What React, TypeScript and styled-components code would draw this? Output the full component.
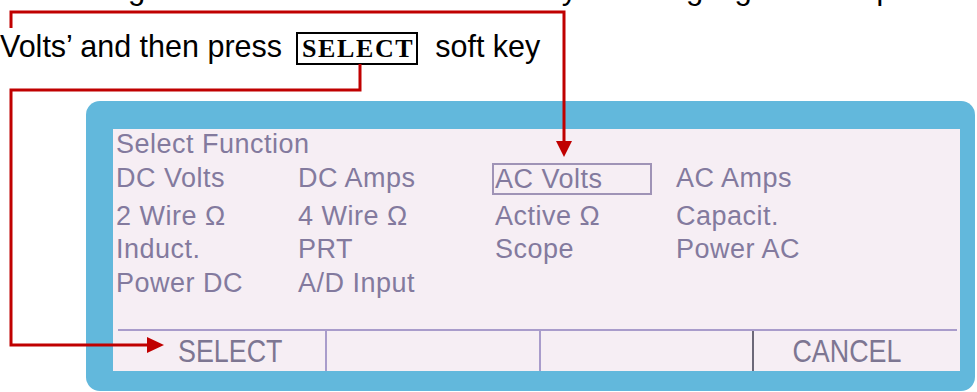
import styled, { createGlobalStyle } from "styled-components";

/* --------------------------------------------------------
   GLOBAL
-------------------------------------------------------- */
const GlobalStyle = createGlobalStyle`
  html, body {
    margin: 0;
    padding: 0;
    background: #ffffff;
  }
  body {
    overflow: hidden;
  }
`;

/* --------------------------------------------------------
   STYLES
-------------------------------------------------------- */
const Page = styled.div`
  position: relative;
  width: 977px;
  height: 392px;
  overflow: hidden;
  background: #ffffff;
  font-family: "Liberation Sans", Arial, sans-serif;
`;

// manual text, cropped top and sides like the original scan
const Instructions = styled.div`
  margin-top: -39px;
  font-size: 30.5px;
  line-height: 55px;
  color: #000;
  white-space: nowrap;
`;

const Line = styled.div<{ $gap?: number; $size?: number }>`
  height: 55px;
  margin-bottom: ${(p) => p.$gap ?? 0}px;
  ${(p) => (p.$size ? `font-size: ${p.$size}px;` : "")}
`;

const KeyName = styled.span`
  display: inline-block;
  font-family: "Liberation Serif", "Times New Roman", serif;
  font-weight: 700;
  font-size: 26px;
  letter-spacing: 1.6px;
  line-height: 29px;
  padding: 0 2px 0 4px;
  border: 2px solid #000;
  margin-left: 14px;
`;

const Bezel = styled.div`
  margin: 27px 0 0 86px;
  width: 889px;
  height: 290px;
  box-sizing: border-box;
  padding: 28px 15px 20px 27px;
  background: #62b8dc;
  border-radius: 14px;
`;

const Screen = styled.div`
  height: 100%;
  display: flex;
  flex-direction: column;
  background: #f6eef4;
  color: #837a9e;
`;

const Heading = styled.div`
  padding-left: 3px;
  font-size: 27px;
  letter-spacing: 0.5px;
  line-height: 30px;
`;

const FunctionGrid = styled.div`
  display: grid;
  grid-template-columns: 182px 197px 181px 1fr;
  grid-template-rows: 38px 33px 34px 35px;
  margin-top: 2px;
  padding-left: 3px;
  font-size: 27px;
  letter-spacing: 0.5px;
  line-height: 35px;
`;

const Item = styled.div<{ $selected?: boolean }>`
  white-space: nowrap;
  ${(p) =>
    p.$selected &&
    `
    align-self: start;
    width: 160px;
    height: 32px;
    box-sizing: border-box;
    margin: 2px 0 0 -3px;
    padding-left: 1px;
    border: 2px solid #9f93b6;
    line-height: 28px;
  `}
`;

const SoftKeyBar = styled.div`
  margin: auto 3px 0 5px;
  height: 42px;
  box-sizing: border-box;
  display: grid;
  grid-template-columns: 207px 214px 213px 1fr;
  border-top: 2px solid #a99ccb;
`;

const SoftKey = styled.div<{ $edge?: "none" | "light" | "dark"; $shift?: number }>`
  display: flex;
  align-items: center;
  justify-content: center;
  padding-left: ${(p) => Math.max(p.$shift ?? 0, 0)}px;
  padding-right: ${(p) => Math.max(-(p.$shift ?? 0), 0)}px;
  border-left: 2px solid
    ${(p) => (p.$edge === "dark" ? "#6c6878" : p.$edge === "light" ? "#a99ccb" : "transparent")};
  font-size: 32px;
  line-height: 40px;
  color: #7d7692;
`;

const KeyLabel = styled.span`
  display: inline-block;
  transform: scaleX(0.84);
`;

const Callouts = styled.svg`
  position: absolute;
  left: 0;
  top: 0;
  pointer-events: none;
`;

const functions = [
  "DC Volts",
  "DC Amps",
  "AC Volts",
  "AC Amps",
  "2 Wire Ω",
  "4 Wire Ω",
  "Active Ω",
  "Capacit.",
  "Induct.",
  "PRT",
  "Scope",
  "Power AC",
  "Power DC",
  "A/D Input",
];

export default function App() {
  const selected = "AC Volts";

  return (
    <Page>
      <GlobalStyle />
      <Instructions>
        <Line $gap={3} $size={31.1}>
          Now using the front cursor arrow hard keys and highlight the required option ‘AC
        </Line>
        <Line>
          Volts’ and then press<KeyName>SELECT</KeyName>
          {"\u00a0 soft key"}
        </Line>
      </Instructions>

      <Bezel>
        <Screen>
          <Heading>Select Function</Heading>
          <FunctionGrid>
            {functions.map((f) => (
              <Item key={f} $selected={f === selected}>
                {f}
              </Item>
            ))}
          </FunctionGrid>
          <SoftKeyBar>
            <SoftKey $edge="none" $shift={16}>
              <KeyLabel>SELECT</KeyLabel>
            </SoftKey>
            <SoftKey $edge="light" />
            <SoftKey $edge="light" />
            <SoftKey $edge="dark" $shift={-18}>
              <KeyLabel>CANCEL</KeyLabel>
            </SoftKey>
          </SoftKeyBar>
        </Screen>
      </Bezel>

      <Callouts width={977} height={392} viewBox="0 0 977 392">
        <g fill="none" stroke="#c00000" strokeWidth={3}>
          <path d="M11 28 V12 H564 V142" />
          <path d="M360 64 V90 H11 V345 H148" />
        </g>
        <g fill="#c00000">
          <polygon points="556,141 572,141 564,157" />
          <polygon points="147,337 147,353 164,345" />
        </g>
      </Callouts>
    </Page>
  );
}
